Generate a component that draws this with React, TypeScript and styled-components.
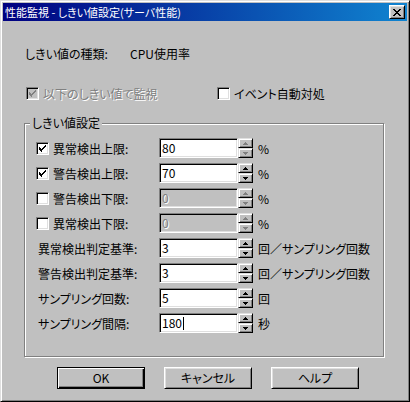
import React from 'react'
import styled, { createGlobalStyle } from 'styled-components'

const GlobalStyle = createGlobalStyle`
  html, body {
    margin: 0;
    padding: 0;
    background: #c0c0c0;
  }
  body {
    font-family: "Noto Sans CJK JP", "Noto Sans", sans-serif;
    font-size: 12px;
    color: #000;
    font-feature-settings: "palt";
  }
`

const Window = styled.div`
  width: 410px;
  height: 402px;
  box-sizing: border-box;
  background: #c0c0c0;
  border: 1px solid;
  border-color: #dfdfdf #000 #000 #dfdfdf;
  box-shadow: inset 1px 1px 0 #fff, inset -1px -1px 0 #808080;
  padding: 2px;
  display: flex;
  flex-direction: column;
`

const TitleBar = styled.div`
  height: 18px;
  flex-shrink: 0;
  display: flex;
  align-items: center;
  justify-content: space-between;
  padding: 0 2px;
  background: linear-gradient(90deg, #000080, #1084d0);
  color: #fff;
  font-size: 11px;
  line-height: 18px;
`

const CloseButton = styled.div`
  width: 16px;
  height: 14px;
  box-sizing: border-box;
  background: #c0c0c0;
  border: 1px solid;
  border-color: #fff #000 #000 #fff;
  box-shadow: inset 1px 1px 0 #dfdfdf, inset -1px -1px 0 #808080;
  display: flex;
  align-items: center;
  justify-content: center;
`

const Body = styled.div`
  padding-left: 21px;
  display: flex;
  flex-direction: column;
`

const TypeRow = styled.div`
  margin-top: 25px;
  padding-left: 1px;
  height: 16px;
  line-height: 16px;
  display: flex;
`

const TypeLabel = styled.span`
  width: 105px;
`

const OptionRow = styled.div`
  margin-top: 23px;
  padding-left: 2px;
  height: 17px;
  display: flex;
  align-items: center;
`

const OptionItem = styled.label<{ $width?: number; $disabled?: boolean }>`
  display: flex;
  align-items: center;
  gap: 4px;
  width: ${p => (p.$width ? `${p.$width}px` : 'auto')};
  color: ${p => (p.$disabled ? '#808080' : '#000')};
  text-shadow: ${p => (p.$disabled ? '1px 1px 0 #fff' : 'none')};
`

const Box = styled.span<{ $disabled?: boolean }>`
  width: 13px;
  height: 13px;
  box-sizing: border-box;
  flex-shrink: 0;
  background: ${p => (p.$disabled ? '#c0c0c0' : '#fff')};
  border: 1px solid;
  border-color: #808080 #fff #fff #808080;
  box-shadow: inset 1px 1px 0 #000, inset -1px -1px 0 #dfdfdf;
  display: flex;
  align-items: center;
  justify-content: center;
`

const Group = styled.fieldset`
  margin: 14px 0 0 0;
  width: 360px;
  box-sizing: border-box;
  padding: 8px 0 23px 11px;
  border: 1px solid #808080;
  box-shadow: 1px 1px 0 #fff, inset 1px 1px 0 #fff;
  display: flex;
  flex-direction: column;
  gap: 5px;
`

const Legend = styled.legend`
  margin-left: -6px;
  padding: 0 2px;
  line-height: 14px;
  height: 14px;
  background: #c0c0c0;
`

const Row = styled.div`
  display: flex;
  align-items: center;
  height: 20px;
`

const LabelCell = styled.div<{ $indent: number }>`
  width: 123px;
  box-sizing: border-box;
  padding-left: ${p => p.$indent}px;
  display: flex;
  align-items: center;
  gap: 4px;
`

const SpinField = styled.div`
  display: flex;
  width: 94px;
  height: 20px;
`

const EditBox = styled.div<{ $disabled?: boolean }>`
  flex: 1;
  box-sizing: border-box;
  border: 1px solid;
  border-color: #808080 #fff #fff #808080;
  box-shadow: inset 1px 1px 0 #000, inset -1px -1px 0 #dfdfdf;
  background: ${p => (p.$disabled ? '#c0c0c0' : '#fff')};
  color: ${p => (p.$disabled ? '#808080' : '#000')};
  text-shadow: ${p => (p.$disabled ? '1px 1px 0 #fff' : 'none')};
  padding-left: 2px;
  line-height: 18px;
  display: flex;
  align-items: center;
`

const Caret = styled.span`
  width: 1px;
  height: 13px;
  background: #000;
  margin-left: 1px;
`

const Spinner = styled.div`
  width: 15px;
  display: flex;
  flex-direction: column;
`

const SpinButton = styled.div`
  flex: 1;
  box-sizing: border-box;
  background: #c0c0c0;
  border: 1px solid;
  border-color: #dfdfdf #000 #000 #dfdfdf;
  box-shadow: inset 1px 1px 0 #fff, inset -1px -1px 0 #808080;
  display: flex;
  align-items: center;
  justify-content: center;
`

const Suffix = styled.span`
  margin-left: 5px;
`

const ButtonRow = styled.div`
  margin-top: 10px;
  padding-left: 33px;
  display: flex;
  gap: 19px;
`

const Button = styled.div<{ $default?: boolean }>`
  width: 88px;
  height: 22px;
  box-sizing: border-box;
  border: 1px solid;
  border-color: ${p => (p.$default ? '#000' : '#fff #000 #000 #fff')};
  box-shadow: ${p =>
    p.$default
      ? 'inset 1px 1px 0 #fff, inset -1px -1px 0 #000, inset -2px -2px 0 #808080'
      : 'inset 1px 1px 0 #dfdfdf, inset -1px -1px 0 #808080'};
  display: flex;
  align-items: center;
  justify-content: center;
  padding-bottom: 1px;
`

const Check = ({ color }: { color: string }) => (
  <svg width="7" height="7" viewBox="0 0 7 7" shapeRendering="crispEdges">
    <path
      d="M0 2h1v1H0zM0 3h2v1H0zM0 4h3v1H0zM1 5h2v1H1zM2 6h1v1H2zM3 3h1v2H3zM4 2h1v2H4zM5 1h1v2H5zM6 0h1v2H6z"
      fill={color}
    />
  </svg>
)

const CheckBox = ({
  checked,
  disabled,
}: {
  checked?: boolean
  disabled?: boolean
}) => (
  <Box $disabled={disabled}>
    {checked && <Check color={disabled ? '#808080' : '#000'} />}
  </Box>
)

const Arrow = ({ up, dim }: { up?: boolean; dim?: boolean }) => (
  <svg width="5" height="3" viewBox="0 0 5 3" shapeRendering="crispEdges">
    <path
      d={up ? 'M2 0h1v1H2zM1 1h3v1H1zM0 2h5v1H0z' : 'M0 0h5v1H0zM1 1h3v1H1zM2 2h1v1H2z'}
      fill={dim ? '#808080' : '#000'}
    />
  </svg>
)

type Field = {
  label: string
  check?: boolean
  checked?: boolean
  value: string
  unit: string
  disabled?: boolean
  dimArrows?: boolean
  caret?: boolean
}

const fields: Field[] = [
  { label: '異常検出上限:', check: true, checked: true, value: '80', unit: '%', dimArrows: true },
  { label: '警告検出上限:', check: true, checked: true, value: '70', unit: '%' },
  { label: '警告検出下限:', check: true, value: '0', unit: '%', disabled: true, dimArrows: true },
  { label: '異常検出下限:', check: true, value: '0', unit: '%', disabled: true, dimArrows: true },
  { label: '異常検出判定基準:', value: '3', unit: '回／サンプリング回数' },
  { label: '警告検出判定基準:', value: '3', unit: '回／サンプリング回数' },
  { label: 'サンプリング回数:', value: '5', unit: '回' },
  { label: 'サンプリング間隔:', value: '180', unit: '秒', caret: true },
]

export default function App() {
  return (
    <>
      <GlobalStyle />
      <Window>
        <TitleBar>
          <span>性能監視 - しきい値設定(サーバ性能)</span>
          <CloseButton>
            <svg width="8" height="7" viewBox="0 0 8 7" shapeRendering="crispEdges">
              <path
                d="M0 0h2v1H0zM6 0h2v1H6zM1 1h2v1H1zM5 1h2v1H5zM2 2h4v1H2zM3 3h2v1H3zM2 4h4v1H2zM1 5h2v1H1zM5 5h2v1H5zM0 6h2v1H0zM6 6h2v1H6z"
                fill="#000"
              />
            </svg>
          </CloseButton>
        </TitleBar>
        <Body>
          <TypeRow>
            <TypeLabel>しきい値の種類:</TypeLabel>
            <span>CPU使用率</span>
          </TypeRow>
          <OptionRow>
            <OptionItem $width={191} $disabled>
              <CheckBox checked disabled />
              以下のしきい値で監視
            </OptionItem>
            <OptionItem>
              <CheckBox />
              イベント自動対処
            </OptionItem>
          </OptionRow>
          <Group>
            <Legend>しきい値設定</Legend>
            {fields.map(f => (
              <Row key={f.label}>
                <LabelCell $indent={f.check ? 0 : 2}>
                  {f.check && <CheckBox checked={f.checked} />}
                  {f.label}
                </LabelCell>
                <SpinField>
                  <EditBox $disabled={f.disabled}>
                    {f.value}
                    {f.caret && <Caret />}
                  </EditBox>
                  <Spinner>
                    <SpinButton>
                      <Arrow up dim={f.dimArrows} />
                    </SpinButton>
                    <SpinButton>
                      <Arrow dim={f.dimArrows} />
                    </SpinButton>
                  </Spinner>
                </SpinField>
                <Suffix>{f.unit}</Suffix>
              </Row>
            ))}
          </Group>
          <ButtonRow>
            <Button $default>OK</Button>
            <Button>キャンセル</Button>
            <Button>ヘルプ</Button>
          </ButtonRow>
        </Body>
      </Window>
    </>
  )
}
